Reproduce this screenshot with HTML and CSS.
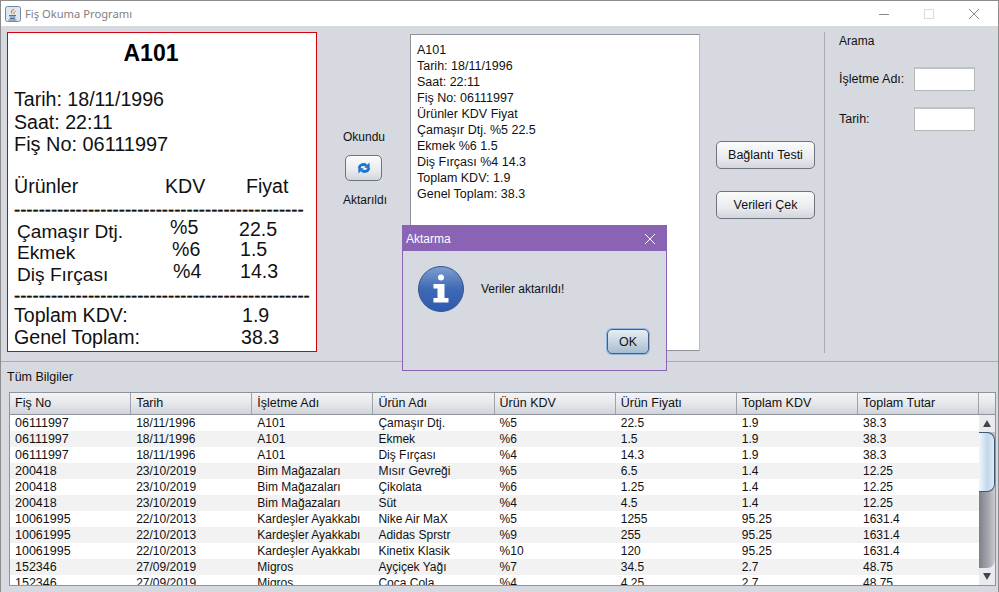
FILE: index.html
```html
<!DOCTYPE html>
<html lang="tr">
<head>
  <meta charset="UTF-8" />
  <title>Fiş Okuma Programı</title>
  <link rel="stylesheet" href="styles.css">
</head>
<body>
  <div class="window">
    <header class="titlebar">
      <svg class="java-icon" width="16" height="16" viewBox="0 0 16 16">
        <rect x="0.5" y="0.5" width="15" height="15" rx="2" fill="#dfe7f0" stroke="#6f8aa8"/>
        <path d="M9 2c1 2-3 3-2 5 .4.8 1 1 1 1-2-.5-3-2-1.500-3.500C7.500 3.500 8.800 3 9 2z" fill="#e2761c"/>
        <path d="M10.500 5c-1 .8-2 1.300-1.500 3" fill="none" stroke="#e2761c"/>
        <path d="M4 9.500h7M4.500 11h6M5 12.500h5M3.500 14h8" stroke="#44678c" stroke-width="0.9"/>
      </svg>
      <span class="title-text">Fiş Okuma Programı</span>
      <div class="win-controls">
        <svg width="10" height="10" viewBox="0 0 10 10"><path d="M0 5.500h10" stroke="#8a8a8a"/></svg>
        <svg width="10" height="10" viewBox="0 0 10 10"><rect x="0.500" y="0.500" width="9" height="9" fill="none" stroke="#dcdcdc"/></svg>
        <svg width="10" height="10" viewBox="0 0 10 10"><path d="M0 0l10 10M10 0L0 10" stroke="#8a8a8a"/></svg>
      </div>
    </header>

    <main class="content">
      <section class="top-panel">
        <div class="receipt">
          <svg class="receipt-art" width="308" height="318" viewBox="0 0 308 318">
            <text class="r-head" x="115.500" y="28">A101</text>
            <text class="r-text" x="6" y="73">Tarih: 18/11/1996</text>
            <text class="r-text" x="6" y="96">Saat: 22:11</text>
            <text class="r-text r-wide" x="6" y="118">Fiş No: 06111997</text>
            <text class="r-text" x="6" y="160">Ürünler</text>
            <text class="r-text" x="157" y="160">KDV</text>
            <text class="r-text" x="238" y="160">Fiyat</text>
            <text class="r-dash" x="6" y="183">-----------------------------------------------</text>
            <text class="r-item" x="9" y="205">Çamaşır Dtj.</text>
            <text class="r-text" x="162" y="201">%5</text>
            <text class="r-text" x="231" y="203">22.5</text>
            <text class="r-item" x="9" y="226">Ekmek</text>
            <text class="r-text" x="164" y="223">%6</text>
            <text class="r-text" x="232" y="223">1.5</text>
            <text class="r-item" x="9" y="248">Diş Fırçası</text>
            <text class="r-text" x="165" y="245">%4</text>
            <text class="r-text" x="232" y="245">14.3</text>
            <text class="r-dash" x="6" y="269">------------------------------------------------</text>
            <text class="r-text" x="6" y="289">Toplam KDV:</text>
            <text class="r-text" x="234" y="289">1.9</text>
            <text class="r-text" x="6" y="311">Genel Toplam:</text>
            <text class="r-text" x="233" y="311">38.3</text>
          </svg>
        </div>

        <div class="status-col">
          <span>Okundu</span>
          <button class="btn refresh-btn">
            <svg width="14" height="14" viewBox="0 0 16 16">
              <g id="refreshHalf">
                <path d="M2.500 8C3 4.300 7.300 2.700 10.800 5.200" fill="none" stroke="#1a74cc" stroke-width="3.200"/>
                <path d="M8.500 7.800L14.500 8 14.300 1.600z" fill="#1a74cc"/>
              </g>
              <use href="#refreshHalf" transform="rotate(180 8 8)"/>
            </svg>
          </button>
          <span>Aktarıldı</span>
        </div>

        <div class="text-area">
          <div>A101</div>
          <div>Tarih: 18/11/1996</div>
          <div>Saat: 22:11</div>
          <div>Fiş No: 06111997</div>
          <div>Ürünler KDV Fiyat</div>
          <div>Çamaşır Dtj. %5 22.5</div>
          <div>Ekmek %6 1.5</div>
          <div>Diş Fırçası %4 14.3</div>
          <div>Toplam KDV: 1.9</div>
          <div>Genel Toplam: 38.3</div>
        </div>

        <div class="action-col">
          <button class="btn action-btn">Bağlantı Testi</button>
          <button class="btn action-btn">Verileri Çek</button>
        </div>

        <aside class="search-col">
          <div class="search-title">Arama</div>
          <label class="search-row">İşletme Adı:<input class="search-input" type="text"></label>
          <label class="search-row">Tarih:<input class="search-input" type="text"></label>
        </aside>
      </section>

      <section class="bottom-panel">
        <div class="panel-title">Tüm Bilgiler</div>
        <div class="table-wrap">
          <div class="table-head">
            <div>Fiş No</div><div>Tarih</div><div>İşletme Adı</div><div>Ürün Adı</div>
            <div>Ürün KDV</div><div>Ürün Fiyatı</div><div>Toplam KDV</div><div>Toplam Tutar</div><div></div>
          </div>
          <div class="table-body">
            <div class="rows">
              <div class="row"><span>06111997</span><span>18/11/1996</span><span>A101</span><span>Çamaşır Dtj.</span><span>%5</span><span>22.5</span><span>1.9</span><span>38.3</span></div>
              <div class="row"><span>06111997</span><span>18/11/1996</span><span>A101</span><span>Ekmek</span><span>%6</span><span>1.5</span><span>1.9</span><span>38.3</span></div>
              <div class="row"><span>06111997</span><span>18/11/1996</span><span>A101</span><span>Diş Fırçası</span><span>%4</span><span>14.3</span><span>1.9</span><span>38.3</span></div>
              <div class="row"><span>200418</span><span>23/10/2019</span><span>Bim Mağazaları</span><span>Mısır Gevreği</span><span>%5</span><span>6.5</span><span>1.4</span><span>12.25</span></div>
              <div class="row"><span>200418</span><span>23/10/2019</span><span>Bim Mağazaları</span><span>Çikolata</span><span>%6</span><span>1.25</span><span>1.4</span><span>12.25</span></div>
              <div class="row"><span>200418</span><span>23/10/2019</span><span>Bim Mağazaları</span><span>Süt</span><span>%4</span><span>4.5</span><span>1.4</span><span>12.25</span></div>
              <div class="row"><span>10061995</span><span>22/10/2013</span><span>Kardeşler Ayakkabı</span><span>Nike Air MaX</span><span>%5</span><span>1255</span><span>95.25</span><span>1631.4</span></div>
              <div class="row"><span>10061995</span><span>22/10/2013</span><span>Kardeşler Ayakkabı</span><span>Adidas Sprstr</span><span>%9</span><span>255</span><span>95.25</span><span>1631.4</span></div>
              <div class="row"><span>10061995</span><span>22/10/2013</span><span>Kardeşler Ayakkabı</span><span>Kinetix Klasik</span><span>%10</span><span>120</span><span>95.25</span><span>1631.4</span></div>
              <div class="row"><span>152346</span><span>27/09/2019</span><span>Migros</span><span>Ayçiçek Yağı</span><span>%7</span><span>34.5</span><span>2.7</span><span>48.75</span></div>
              <div class="row"><span>152346</span><span>27/09/2019</span><span>Migros</span><span>Coca Cola</span><span>%4</span><span>4.25</span><span>2.7</span><span>48.75</span></div>
            </div>
            <div class="scrollbar">
              <div class="scroll-arrow"><i class="arrow-up"></i></div>
              <div class="scroll-track"><div class="scroll-thumb"></div></div>
              <div class="scroll-arrow"><i class="arrow-down"></i></div>
            </div>
          </div>
        </div>
      </section>
    </main>

    <div class="dialog">
      <div class="dialog-title">
        <span>Aktarma</span>
        <svg width="12" height="12" viewBox="0 0 12 12"><path d="M1 1l10 10M11 1L1 11" stroke="#fff"/></svg>
      </div>
      <div class="dialog-body">
        <svg class="info-icon" width="46" height="46" viewBox="0 0 46 46">
          <defs>
            <linearGradient id="infoFill" x1="0" y1="0" x2="0" y2="1">
              <stop offset="0" stop-color="#7f9fcf"/>
              <stop offset="0.5" stop-color="#3e69b4"/>
              <stop offset="1" stop-color="#2c5ab0"/>
            </linearGradient>
          </defs>
          <circle cx="23" cy="23" r="22.500" fill="url(#infoFill)" stroke="#34568f"/>
          <circle cx="23" cy="11.500" r="3" fill="#fff"/>
          <path d="M15.500 18h11v14h4v4.500h-15V32h4v-9.500h-4z" fill="#fff"/>
        </svg>
        <span class="dialog-msg">Veriler aktarıldı!</span>
      </div>
      <div class="dialog-foot">
        <button class="btn ok-btn">OK</button>
      </div>
    </div>
  </div>
</body>
</html>
```

FILE: styles.css
```css
* {
  box-sizing: border-box;
}

html, body {
  margin: 0;
  height: 100%;
}

body {
  font-family: "Liberation Sans", Arial, sans-serif;
  font-size: 12px;
  color: #111;
  background: #d6d9df;
}

.window {
  position: relative;
  width: 999px;
  height: 592px;
  overflow: hidden;
  border: 1px solid #8c8c8c;
  border-bottom: 0;
  display: flex;
  flex-direction: column;
}

.titlebar {
  height: 25px;
  flex: none;
  background: #fff;
  display: flex;
  align-items: center;
  padding-left: 4px;
}

.title-text {
  margin-left: 4px;
  font-family: "Noto Sans", sans-serif;
  font-size: 11.2px;
  color: #7f7f7f;
}

.win-controls {
  margin-left: auto;
  display: flex;
  gap: 35px;
  padding-right: 19px;
}

.content {
  flex: 1;
  display: flex;
  flex-direction: column;
  min-height: 0;
}

.top-panel {
  height: 336px;
  flex: none;
  display: flex;
  border-bottom: 1px solid #a9abb0;
  padding: 6px 0 0 6px;
}

.receipt {
  width: 310px;
  height: 320px;
  background: #fff;
  border: 1px solid #d3000f;
  flex: none;
}

.receipt-art {
  display: block;
}

.r-text {
  font-size: 19.6px;
  fill: #111;
}

.r-wide {
  font-size: 19.9px;
}

.r-item {
  font-size: 19.1px;
  fill: #111;
}

.r-head {
  font-size: 23px;
  font-weight: bold;
  fill: #000;
}

.r-dash {
  font-size: 18.5px;
  fill: #111;
  stroke: #111;
  stroke-width: 0.4;
}

.status-col {
  width: 93px;
  flex: none;
  padding: 98px 0 0 26px;
  display: flex;
  flex-direction: column;
  align-items: flex-start;
}

.btn {
  font-family: "Liberation Sans", Arial, sans-serif;
  font-size: 12.5px;
  color: #111;
  border: 1px solid #6f737c;
  border-radius: 5px;
  background: linear-gradient(#fbfbfc, #e9ebef 60%, #d2d5dc);
  padding: 0;
}

.refresh-btn {
  width: 37px;
  height: 26px;
  margin: 11px 0 12px 2px;
  display: flex;
  align-items: center;
  justify-content: center;
}

.text-area {
  width: 290px;
  height: 317px;
  flex: none;
  margin-top: 2px;
  padding: 7px 6px;
  background: #fff;
  border: 1px solid #8e939c;
  border-right-color: #b9bcc2;
  font-size: 12.5px;
  line-height: 16px;
}

.action-col {
  width: 124px;
  flex: none;
  padding: 109px 0 0 16px;
  display: flex;
  flex-direction: column;
  gap: 22px;
}

.action-btn {
  width: 99px;
  height: 28px;
}

.search-col {
  flex: 1;
  border-left: 1px solid #a9abb0;
  padding-left: 14px;
  margin-bottom: 8px;
}

.search-title {
  margin-top: 1px;
  line-height: 16px;
  margin-bottom: 18px;
}

.search-row {
  display: flex;
  align-items: center;
  justify-content: space-between;
  width: 136px;
  margin-bottom: 16px;
  font-size: 12.5px;
}

.search-input {
  width: 61px;
  height: 24px;
  background: #fff;
  border: 1px solid #b5b7bb;
  border-top: 2px solid #c0c2c6;
  outline: none;
  padding: 0;
}

.bottom-panel {
  flex: 1;
  min-height: 0;
  padding: 7px 0 0 6px;
}

.panel-title {
  font-size: 12.5px;
  line-height: 16px;
  margin-bottom: 7px;
}

.table-wrap {
  width: 987px;
  margin-left: 2px;
  height: 194px;
  border: 1px solid #8e939c;
  display: flex;
  flex-direction: column;
  background: #fff;
}

.table-head {
  height: 22px;
  flex: none;
  display: grid;
  grid-template-columns: repeat(8, 121.15px) 1fr;
  background: linear-gradient(#f3f4f6, #e4e6ea 55%, #cfd2d8);
  border-bottom: 1px solid #8e939c;
  font-size: 12.5px;
}

.table-head div {
  padding-left: 5px;
  line-height: 21px;
  border-right: 1px solid #9ea2aa;
  white-space: nowrap;
}

.table-head div:last-child {
  border-right: 0;
}

.table-body {
  flex: 1;
  min-height: 0;
  display: flex;
}

.rows {
  flex: 1;
  min-width: 0;
  overflow: hidden;
}

.row {
  display: grid;
  grid-template-columns: repeat(8, 121.15px);
  height: 16px;
  line-height: 16px;
  background: #fff;
}

.row:nth-child(even) {
  background: #f2f2f2;
}

.row span {
  padding-left: 5px;
  white-space: nowrap;
}

.row span:first-child {
  font-size: 12.5px;
}

.scrollbar {
  width: 16px;
  flex: none;
  display: flex;
  flex-direction: column;
  background: #e9ebef;
}

.scroll-arrow {
  height: 17px;
  flex: none;
  display: flex;
  align-items: center;
  justify-content: center;
}

.arrow-up {
  border: 4px solid transparent;
  border-top: 0;
  border-bottom: 7px solid #40444c;
}

.arrow-down {
  border: 4px solid transparent;
  border-bottom: 0;
  border-top: 7px solid #40444c;
}

.scroll-track {
  flex: 1;
  background: linear-gradient(90deg, #7d8087, #a7a9ae 60%, #c9cbd0);
  border-radius: 0 0 8px 0;
}

.scroll-thumb {
  height: 60px;
  background: linear-gradient(90deg, #f1f6fb, #c2d8ec 55%, #dfe9f3);
  border: 1px solid #3d5a78;
  border-left: 0;
  border-radius: 0 8px 8px 0;
}

/* message box sits over the main window */
.dialog {
  position: absolute;
  left: 401px;
  top: 224px;
  width: 265px;
  height: 146px;
  background: #d6d9df;
  border: 1px solid #8a63b5;
  display: flex;
  flex-direction: column;
}

.dialog-title {
  height: 25px;
  flex: none;
  background: #8a63b5;
  color: #fff;
  display: flex;
  align-items: center;
  justify-content: space-between;
  padding: 0 10px 0 3px;
}

.dialog-body {
  display: flex;
  align-items: flex-start;
  padding: 15px 0 0 15px;
  flex: 1;
}

.dialog-msg {
  margin: 16px 0 0 17px;
}

.dialog-foot {
  display: flex;
  justify-content: flex-end;
  padding: 0 17px 16px 0;
}

.ok-btn {
  width: 42px;
  height: 25px;
  border-color: #3f5f85;
  box-shadow: 0 0 0 1px #8fb6de;
  background: linear-gradient(#e6edf4, #c9d6e3 50%, #a7bccf);
}
```
